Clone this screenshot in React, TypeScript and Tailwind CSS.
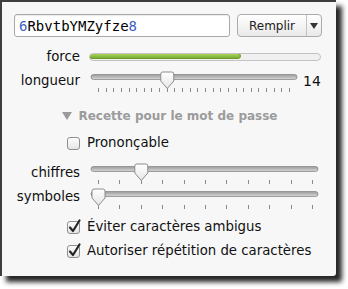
import React from 'react';

const Thumb: React.FC<{ cx: number }> = ({ cx }) => (
  <path
    d={`M${cx - 6.5} 3 q0 -2 2 -2 h9 q2 0 2 2 v7 l-6.5 7.5 l-6.5 -7.5 z`}
    fill="url(#thumbFill)"
    stroke="#8c8c8c"
    strokeWidth="1"
  />
);

type SliderProps = { width: number; ticks: number; tickFrom: number; tickTo: number; at: number };

const Slider: React.FC<SliderProps> = ({ width, ticks, tickFrom, tickTo, at }) => {
  const step = (tickTo - tickFrom) / (ticks - 1);
  const xs = Array.from({ length: ticks }, (_, i) => tickFrom + i * step);
  return (
    <svg width={width} height="22" className="block shrink-0">
      <defs>
        <linearGradient id="trackFill" x1="0" y1="0" x2="0" y2="1">
          <stop offset="0" stopColor="#9a9a9a" />
          <stop offset="1" stopColor="#d8d8d8" />
        </linearGradient>
        <linearGradient id="thumbFill" x1="0" y1="0" x2="0" y2="1">
          <stop offset="0" stopColor="#ffffff" />
          <stop offset="1" stopColor="#e6e6e6" />
        </linearGradient>
      </defs>
      <rect x="2" y="3.5" width={width - 4} height="5" rx="2.5" fill="url(#trackFill)" stroke="#8a8a8a" strokeWidth="0.8" />
      {xs.map((x, i) => (
        <rect key={i} x={Math.round(x)} y="17" width="1" height="4" fill="#8a8a8a" />
      ))}
      <Thumb cx={xs[at] + 0.5} />
    </svg>
  );
};

const Check: React.FC<{ checked?: boolean }> = ({ checked }) => (
  <svg width="15" height="15" className="block shrink-0 overflow-visible">
    <defs>
      <linearGradient id="boxFill" x1="0" y1="0" x2="0" y2="1">
        <stop offset="0" stopColor="#ffffff" />
        <stop offset="1" stopColor="#e3e3e3" />
      </linearGradient>
    </defs>
    <rect x="0.5" y="1.5" width="12" height="12" rx="2.5" fill="url(#boxFill)" stroke="#8f8f8f" />
    {checked && <path d="M3 7.5 L6 11 L12.5 0.5" fill="none" stroke="#262626" strokeWidth="2.2" strokeLinecap="round" strokeLinejoin="round" />}
  </svg>
);

const Label: React.FC<{ children: React.ReactNode }> = ({ children }) => (
  <div className="w-[78px] shrink-0 text-right leading-[16px]">{children}</div>
);

const App: React.FC = () => {
  return (
    <div className="w-[348px] h-[289px] bg-white font-['DejaVu_Sans',sans-serif] text-[13.3px] text-[#111]">
      <div className="w-[336px] h-[276px] border-l-2 border-t-2 border-[#3e3e3e] bg-[#f7f7f7] rounded-br-[3px] shadow-[6px_6px_5px_rgba(0,0,0,0.85)] flex flex-col">
        <div className="flex mt-3 ml-3 gap-[7px]">
          <div className="w-[216px] h-[23px] rounded-[3px] border border-[#a9a9a9] bg-white pl-[4px] flex items-center font-['DejaVu_Sans_Mono',monospace] text-[14px] leading-none shadow-[inset_0_1px_1px_rgba(0,0,0,0.08)]">
            <span className="text-[#3b5fc4]">6</span>
            <span className="text-black">RbvtbYMZyfze</span>
            <span className="text-[#3b5fc4]">8</span>
          </div>
          <div className="w-[85px] h-[23px] rounded-[4px] border border-[#ababab] bg-gradient-to-b from-white to-[#e9e9e9] flex text-[12px] text-[#222]">
            <div className="flex-1 flex items-center justify-center">Remplir</div>
            <div className="w-[15px] border-l border-[#c2c2c2] flex items-center justify-center">
              <svg width="8" height="6"><path d="M0 0 H8 L4 6 z" fill="#333" /></svg>
            </div>
          </div>
        </div>

        <div className="flex items-center mt-3 h-4">
          <Label>force</Label>
          <div className="ml-[9px] w-[232px] h-2 rounded-full border border-[#c3c3c3] bg-[#f0f0f0] overflow-hidden">
            <div className="w-[152px] h-full rounded-full bg-gradient-to-b from-[#a6d25a] to-[#7cae33] border border-[#6a9a2a] -m-px" />
          </div>
        </div>

        <div className="flex items-start mt-[6px]">
          <div className="mt-[2px]"><Label>longueur</Label></div>
          <div className="ml-[9px]"><Slider width={210} ticks={26} tickFrom={9} tickTo={200} at={9} /></div>
          <div className="ml-1 mt-[2px] leading-[16px] text-[14px]">14</div>
        </div>

        <div className="flex items-center justify-center gap-[6px] mt-4 pl-[2px] text-[12px] font-bold text-[#9b9b9b] leading-[14px]">
          <svg width="10" height="8"><path d="M0 0 H10 L5 8 z" fill="#9b9b9b" /></svg>
          <span>Recette pour le mot de passe</span>
        </div>

        <div className="flex items-center gap-[5px] mt-3 ml-[65px] h-4">
          <Check />
          <span>Prononçable</span>
        </div>

        <div className="flex items-start mt-3">
          <div className="mt-[2px]"><Label>chiffres</Label></div>
          <div className="ml-[9px]"><Slider width={231} ticks={11} tickFrom={9} tickTo={223} at={2} /></div>
        </div>

        <div className="flex items-start mt-[3px]">
          <div className="mt-[1px]"><Label>symboles</Label></div>
          <div className="ml-[9px]"><Slider width={231} ticks={11} tickFrom={9} tickTo={223} at={0} /></div>
        </div>

        <div className="flex items-center gap-[5px] mt-[9px] ml-[65px] h-4">
          <Check checked />
          <span>Éviter caractères ambigus</span>
        </div>

        <div className="flex items-center gap-[5px] mt-2 ml-[65px] h-4">
          <Check checked />
          <span>Autoriser répétition de caractères</span>
        </div>
      </div>
    </div>
  );
};

export default App;
